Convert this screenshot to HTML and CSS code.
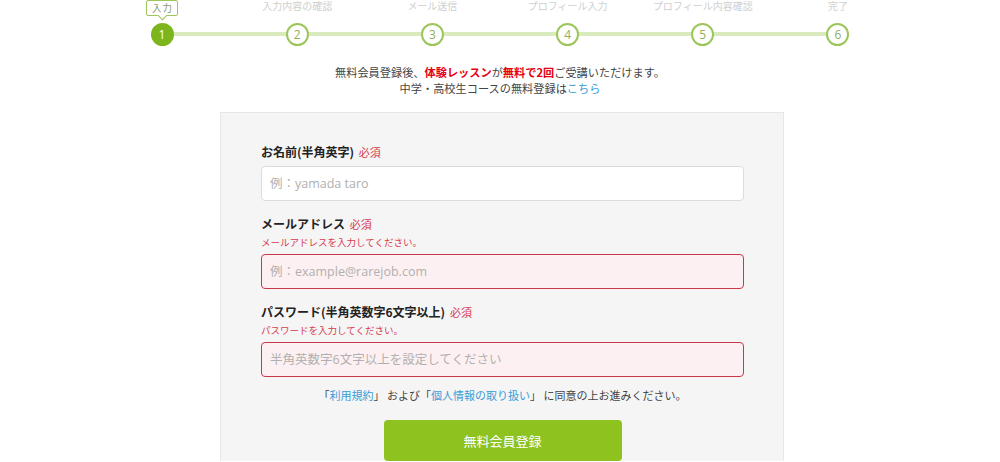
FILE: index.html
```html
<!DOCTYPE html>
<html lang="ja">
  <head>
    <meta charset="UTF-8">
    <title>無料会員登録</title>
    <link rel="stylesheet" href="styles.css">
  </head>
  <body>
    <ol class="steps">
      <li class="step current"><span class="step-label">入力</span><span class="step-num">1</span></li>
      <li class="step"><span class="step-label">入力内容の確認</span><span class="step-num">2</span></li>
      <li class="step"><span class="step-label">メール送信</span><span class="step-num">3</span></li>
      <li class="step"><span class="step-label">プロフィール入力</span><span class="step-num">4</span></li>
      <li class="step"><span class="step-label">プロフィール内容確認</span><span class="step-num">5</span></li>
      <li class="step"><span class="step-label">完了</span><span class="step-num">6</span></li>
    </ol>

    <div class="intro">
      <p>無料会員登録後、<strong>体験レッスン</strong>が<strong>無料で2回</strong>ご受講いただけます。</p>
      <p>中学・高校生コースの無料登録は<a href="#">こちら</a></p>
    </div>

    <form class="form-box">
      <div class="field">
        <label class="field-label">お名前(半角英字) <span class="req">必須</span></label>
        <input class="text-input" placeholder="例：yamada taro">
      </div>
      <div class="field">
        <label class="field-label">メールアドレス <span class="req">必須</span></label>
        <p class="error">メールアドレスを入力してください。</p>
        <input class="text-input invalid" placeholder="例：example@rarejob.com">
      </div>
      <div class="field">
        <label class="field-label">パスワード(半角英数字6文字以上) <span class="req">必須</span></label>
        <p class="error">パスワードを入力してください。</p>
        <input class="text-input invalid" placeholder="半角英数字6文字以上を設定してください">
      </div>
      <p class="agree">「<a href="#">利用規約</a>」 および「<a href="#">個人情報の取り扱い</a>」 に同意の上お進みください。</p>
      <button type="button" class="submit">無料会員登録</button>
    </form>
  </body>
</html>
```

FILE: styles.css
```css
html, body {
  margin: 0;
  padding: 0;
  background: #fff;
  color: #333;
  font-family: "Noto Sans CJK JP", "Open Sans", sans-serif;
}

p { margin: 0; }

a {
  color: #3a9bd5;
  text-decoration: none;
}

/* progress steps */
.steps {
  list-style: none;
  margin: 0 auto;
  padding: 0;
  width: 700px;
  display: flex;
  justify-content: space-between;
  position: relative;
}

.steps::before {
  content: '';
  position: absolute;
  left: 12px;
  right: 12px;
  top: 32px;
  height: 4px;
  background: #d9ebbd;
}

.step {
  width: 24px;
  display: flex;
  flex-direction: column;
  align-items: center;
}

.step-label {
  height: 12px;
  margin-bottom: 11px;
  font-size: 10px;
  line-height: 12px;
  color: #cfcfcf;
  white-space: nowrap;
}

.step.current .step-label {
  position: relative;
  height: 16px;
  margin-bottom: 7px;
  padding: 0 5px;
  box-sizing: border-box;
  line-height: 14px;
  border: 1px solid #9cc55a;
  border-radius: 2px;
  background: #fff;
  color: #8a9a70;
}

.step.current .step-label::after {
  content: '';
  position: absolute;
  left: 50%;
  bottom: -4px;
  width: 6px;
  height: 6px;
  margin-left: -3px;
  background: #fff;
  border-right: 1px solid #9cc55a;
  border-bottom: 1px solid #9cc55a;
  transform: rotate(45deg);
}

.step-num {
  position: relative;
  width: 19px;
  height: 19px;
  border: 2px solid #9cc55a;
  border-radius: 50%;
  background: #fff;
  color: #8fae5c;
  font-family: "Open Sans", sans-serif;
  font-size: 12px;
  line-height: 19px;
  text-align: center;
}

.step.current .step-num {
  background: #7db61c;
  border-color: #7db61c;
  color: #fff;
}

/* intro */
.intro {
  margin-top: 18px;
  text-align: center;
  font-size: 11.2px;
  line-height: 16px;
  color: #444;
}

.intro strong {
  color: #e60012;
}

/* form */
.form-box {
  width: 483px;
  margin: 16px 0 0 calc(50% - 280px);
  padding: 31px 39px 0 40px;
  background: #f5f5f5;
  border: 1px solid #e6e6e6;
  border-bottom: none;
}

.field {
  margin-bottom: 15px;
}

.field:last-of-type {
  margin-bottom: 10px;
}

.field-label {
  display: block;
  font-size: 12px;
  line-height: 16px;
  font-weight: bold;
  color: #222;
  margin-bottom: 6px;
}

.req {
  font-weight: normal;
  font-size: 11px;
  color: #d63b4f;
  margin-left: 2px;
}

.error {
  font-size: 9.5px;
  line-height: 13px;
  color: #d63b4f;
  margin: -2px 0 5px;
}

.text-input {
  display: block;
  width: 100%;
  height: 35px;
  box-sizing: border-box;
  padding: 0 8px;
  border: 1px solid #dcdcdc;
  border-radius: 4px;
  background: #fff;
  font-family: "Open Sans", "Noto Sans CJK JP", sans-serif;
  font-size: 12.5px;
  color: #333;
}

.text-input::placeholder {
  color: #b0b0b0;
}

.text-input.invalid {
  background: #fdf0f2;
  border: 1.5px solid #c8384d;
}

.agree {
  text-align: center;
  font-size: 11px;
  line-height: 16px;
  color: #444;
}

.submit {
  display: block;
  width: 238px;
  height: 41px;
  margin: 17px auto 0;
  border: none;
  border-radius: 4px;
  background: #8dc21f;
  color: #fff;
  font-family: "Noto Sans CJK JP", sans-serif;
  font-size: 13px;
}
```
